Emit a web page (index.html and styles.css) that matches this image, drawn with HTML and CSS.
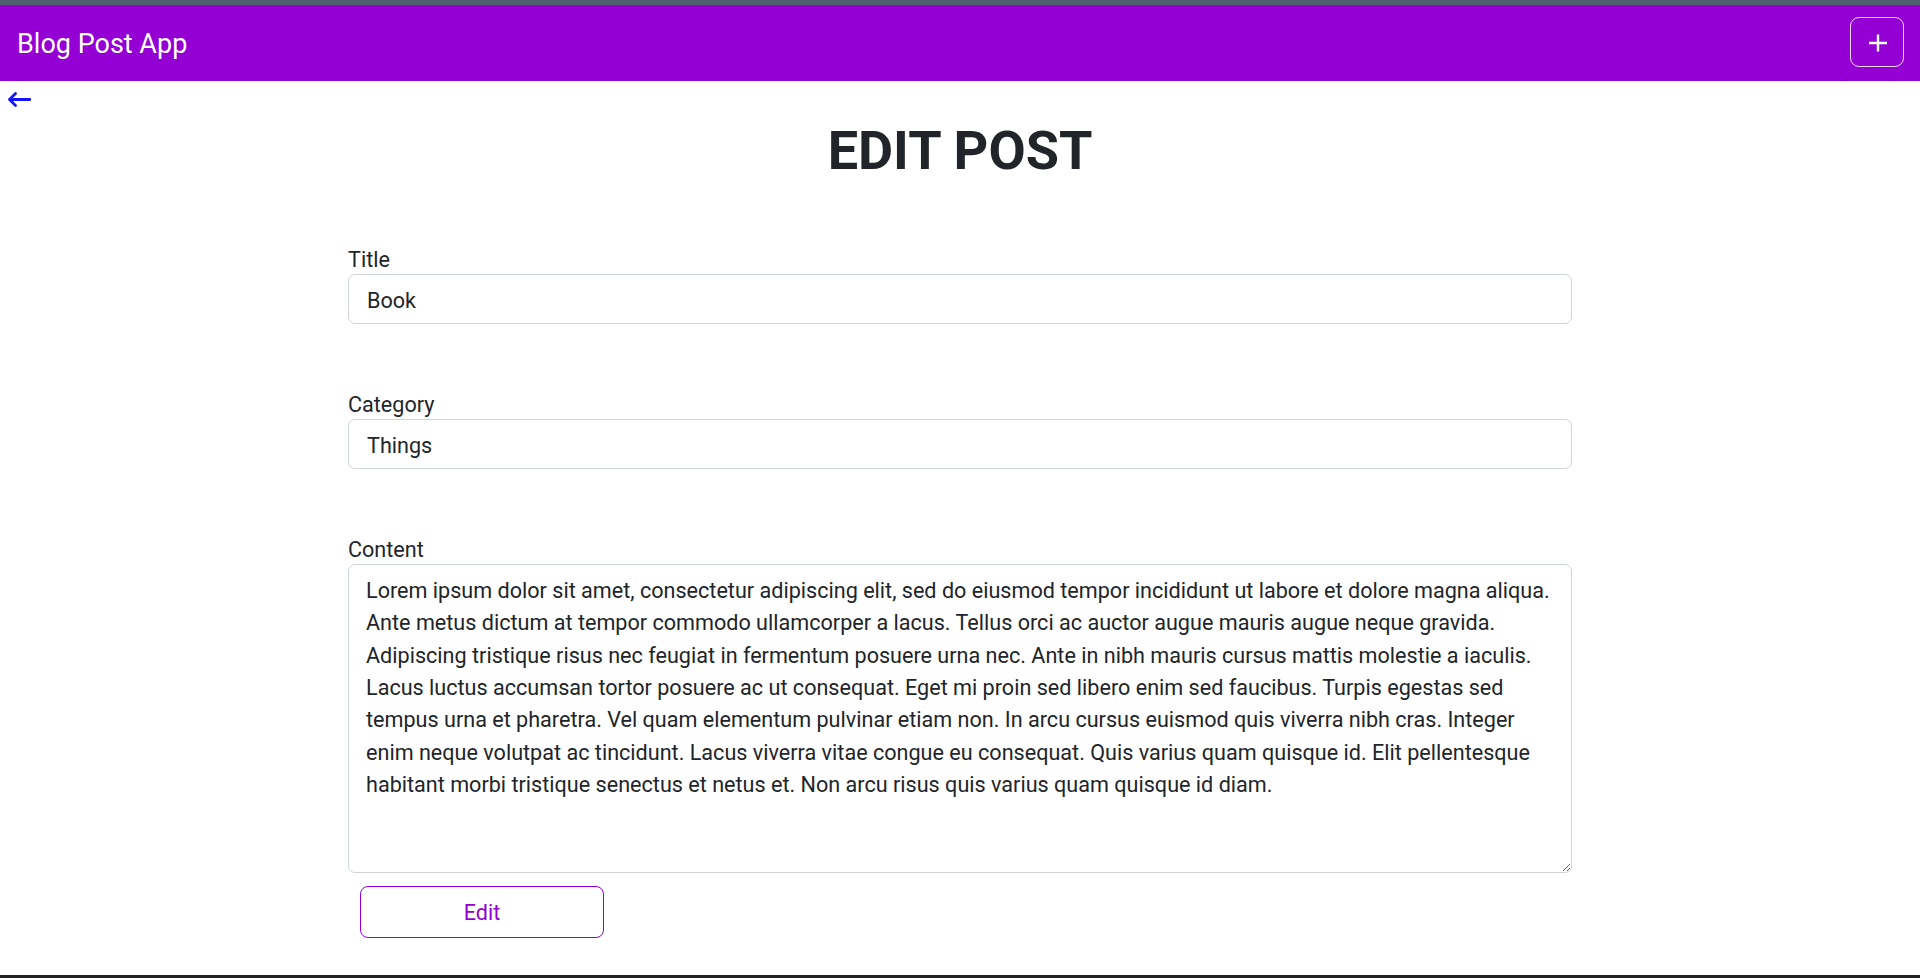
FILE: index.html
```html
<!DOCTYPE html>
<html lang="en">
<head>
<meta charset="utf-8">
<title>Blog Post App</title>
<link rel="stylesheet" href="styles.css">
</head>
<body>
<div class="frame-top"></div>
<nav class="navbar">
  <a class="brand" href="#">Blog Post App</a>
  <button class="add-btn" type="button" aria-label="Add post">
    <svg width="20" height="18" viewBox="0 0 20 18"><path d="M1 9H19M10 0.5V17.5" stroke="#fff" stroke-width="2.4" fill="none"/></svg>
  </button>
</nav>
<main class="main">
  <a class="back" href="#" aria-label="Back">
    <svg width="24" height="15" viewBox="0 0 24 15"><path d="M23 7.5H2.5M8.5 1.5L2.5 7.5L8.5 13.5" stroke="#1414ff" stroke-width="2.8" fill="none" stroke-linecap="round" stroke-linejoin="round"/></svg>
  </a>
  <h1 class="page-title">EDIT POST</h1>
  <form class="post-form">
    <div class="field">
      <label class="field-label" for="title">Title</label>
      <input class="field-input" id="title" type="text" value="Book">
    </div>
    <div class="field">
      <label class="field-label" for="category">Category</label>
      <input class="field-input" id="category" type="text" value="Things">
    </div>
    <div class="field field-last">
      <label class="field-label" for="content">Content</label>
      <textarea class="field-textarea" id="content">Lorem ipsum dolor sit amet, consectetur adipiscing elit, sed do eiusmod tempor incididunt ut labore et dolore magna aliqua. Ante metus dictum at tempor commodo ullamcorper a lacus. Tellus orci ac auctor augue mauris augue neque gravida. Adipiscing tristique risus nec feugiat in fermentum posuere urna nec. Ante in nibh mauris cursus mattis molestie a iaculis. Lacus luctus accumsan tortor posuere ac ut consequat. Eget mi proin sed libero enim sed faucibus. Turpis egestas sed tempus urna et pharetra. Vel quam elementum pulvinar etiam non. In arcu cursus euismod quis viverra nibh cras. Integer enim neque volutpat ac tincidunt. Lacus viverra vitae congue eu consequat. Quis varius quam quisque id. Elit pellentesque habitant morbi tristique senectus et netus et. Non arcu risus quis varius quam quisque id diam.</textarea>
    </div>
    <button class="edit-btn" type="button">Edit</button>
  </form>
</main>
<div class="frame-bottom"></div>
</body>
</html>
```
FILE: styles.css
```css
* { box-sizing: border-box; }
html, body { margin: 0; padding: 0; }
body {
  font-family: Roboto, "Liberation Sans", sans-serif;
  font-size: 21.6px;
  line-height: 1.5;
  color: #212529;
  background: #fff;
  min-height: 978px;
  display: flex;
  flex-direction: column;
}
.frame-top { height: 5px; background: #4f5d6c; flex: none; }
.frame-bottom { height: 3px; background: #222; flex: none; }
.navbar {
  flex: none;
  height: 76px;
  background: #9400d3;
  display: flex;
  align-items: center;
  justify-content: space-between;
  padding: 0 16px 0 17px;
}
.brand {
  color: #fff;
  text-decoration: none;
  font-size: 27px;
  line-height: 40px;
  padding-top: 2px;
}
.add-btn {
  width: 54px;
  height: 50px;
  margin-top: -2px;
  border: 1px solid rgba(255,255,255,0.85);
  border-radius: 9px;
  background: transparent;
  display: flex;
  align-items: center;
  justify-content: center;
  padding: 2px 0 0 1px;
  cursor: pointer;
}
.add-btn svg { display: block; }
.main { flex: 1; }
.back {
  display: block;
  width: 40px;
  height: 38px;
  padding: 11px 0 0 7px;
}
.back svg { display: block; }
.page-title {
  margin: 0 0 58px;
  text-align: center;
  font-size: 54px;
  font-weight: 700;
  line-height: 64.8px;
  color: #212529;
}
.post-form {
  width: 1224px;
  margin: 0 auto;
}
.field { margin-bottom: 63px; }
.field-last { margin-bottom: 13px; }
.field-label {
  display: block;
  height: 32px;
  line-height: 32.4px;
  padding-top: 2px;
}
.field-input,
.field-textarea {
  display: block;
  width: 100%;
  font-family: inherit;
  font-size: 21.6px;
  color: #212529;
  background: #fff;
  border: 1px solid #ced4da;
  border-radius: 7px;
  outline: none;
}
.field-input {
  height: 50px;
  padding: 3px 16px 0 18px;
  line-height: 32.4px;
}
.field-textarea {
  height: 309px;
  padding: 10px 16px 8px 17px;
  line-height: 32.4px;
  resize: vertical;
}
.edit-btn {
  display: block;
  margin-left: 12px;
  width: 244px;
  height: 52px;
  border: 1px solid #9400d3;
  border-radius: 8px;
  background: #fff;
  color: #9400d3;
  font-family: inherit;
  font-size: 21.6px;
  line-height: 32.4px;
  padding: 2px 0 0;
  cursor: pointer;
}
```
